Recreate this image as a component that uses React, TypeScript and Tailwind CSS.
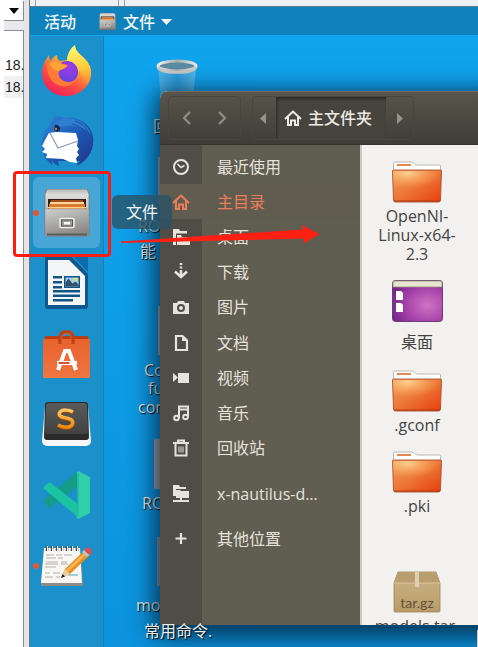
import type { ReactNode } from "react";

const uiFont = "font-['Open_Sans','Noto_Sans_CJK_SC',sans-serif]";

function FirefoxIcon() {
  return (
    <svg width="50" height="52" viewBox="0 0 50 52" aria-hidden="true">
      <defs>
        <linearGradient id="ffBody" x1="0.8" y1="0" x2="0.25" y2="1">
          <stop offset="0" stopColor="#fff35a" />
          <stop offset="0.35" stopColor="#ffb534" />
          <stop offset="0.65" stopColor="#fb5440" />
          <stop offset="1" stopColor="#f01c5c" />
        </linearGradient>
        <linearGradient id="ffTail" x1="0.3" y1="0" x2="0.5" y2="1">
          <stop offset="0" stopColor="#fffb70" />
          <stop offset="0.6" stopColor="#ffc93c" />
          <stop offset="1" stopColor="#ff8b3a" stopOpacity="0.2" />
        </linearGradient>
        <radialGradient id="ffGlobe" cx="0.6" cy="0.3" r="0.8">
          <stop offset="0" stopColor="#a03ae8" />
          <stop offset="1" stopColor="#5b46d8" />
        </radialGradient>
      </defs>
      <path d="M7 10c0 3 1 5 2 6 1-3 3-5 6-6 0 3 1 5 3 6l7-1c1-6 3-11 8-15 0 6 5 9 10 14 4 4 6 8 6 13 0 14-11 24-25 24S0 41 0 28c0-6 3-13 7-18z" fill="url(#ffBody)" />
      <path d="M33 0c0 6 5 9 10 14 8 9 8 20 2 28-2-12-8-18-20-24 0-8 2-13 8-18z" fill="url(#ffTail)" />
      <circle cx="25" cy="27" r="11" fill="url(#ffGlobe)" />
      <path d="M5 20c4-3 9-4 13-3 3 3 6 2 8 3-1 3-6 4-9 6-1 3 0 8 5 10 4 2 8 1 11-1-3 6-11 8-17 5C9 37 5 30 5 20z" fill="#ff7a35" />
      <path d="M7 18c4-2 8-2 11 0 3 2 5 1 7 3-2 3-6 3-8 5-4 0-8-3-10-8z" fill="#ffa436" />
    </svg>
  );
}

function ThunderbirdIcon() {
  return (
    <svg width="54" height="52" viewBox="0 0 54 52" aria-hidden="true">
      <defs>
        <linearGradient id="tbBlue" x1="0" y1="0" x2="1" y2="1">
          <stop offset="0" stopColor="#2f86d8" />
          <stop offset="0.5" stopColor="#1d5db8" />
          <stop offset="1" stopColor="#233087" />
        </linearGradient>
      </defs>
      <path d="M13 1c4-2 8-1 11 1 14-2 26 5 29 18 2 13-5 25-17 30l4-5-22 0 1 5c-3-1-5-3-7-5l0 4C5 44 0 34 2 25l2-8C7 11 11 9 13 1z" fill="url(#tbBlue)" />
      <path d="M24 2c14 0 24 6 27 17-6-8-15-10-24-9-8 0-11 3-14 6 0-6 4-12 11-14z" fill="#2f7fce" />
      <path d="M32 8c9 1 15 8 15 17M35 5c9 3 14 9 15 18" fill="none" stroke="#1b4fa6" strokeWidth="1" />
      <path d="M9 17l7-1 20 1 2 7-1 6 2 3-2 3 2 3-3 3 1 5-7-1-7-3-17-1 1-4-5-2 3-3-3-3 3-6z" fill="#fff" />
      <path d="M10 17l8 15 20-7" fill="none" stroke="#8d9ab8" strokeWidth="1.2" />
      <path d="M15 9c3-1 6 2 5 5l-3 2-3-2z" fill="#16264f" />
      <circle cx="16" cy="13" r="1.2" fill="#c87a35" />
    </svg>
  );
}

function CabinetIcon({ size }: { size: number }) {
  return (
    <svg width={size} height={size} viewBox="0 0 48 48" aria-hidden="true">
      <defs>
        <linearGradient id="cabTop" x1="0" y1="0" x2="0" y2="1">
          <stop offset="0" stopColor="#b5b5b3" />
          <stop offset="0.12" stopColor="#dcdcda" />
          <stop offset="1" stopColor="#8d8d8b" />
        </linearGradient>
        <linearGradient id="cabFront" x1="0" y1="0" x2="0.4" y2="1">
          <stop offset="0" stopColor="#cfcfcd" />
          <stop offset="1" stopColor="#8b8a88" />
        </linearGradient>
      </defs>
      <path d="M4 0h40l2 5v40a2 2 0 0 1-2 2H4a2 2 0 0 1-2-2V5z" fill="url(#cabTop)" stroke="#72716f" strokeWidth="0.7" />
      <path d="M5 10h38v14H5z" fill="#2b221c" />
      <path d="M8 11h32v10H8z" fill="#a54919" />
      <path d="M7 13h34v2H7z" fill="#ffd8a0" />
      <path d="M6 15h36v5H6z" fill="#d97a2c" />
      <path d="M5 18h38v1.500H5z" fill="#ffcf91" />
      <path d="M2 20h44v25a2 2 0 0 1-2 2H4a2 2 0 0 1-2-2z" fill="url(#cabFront)" stroke="#8f8e8c" strokeWidth="0.500" />
      <path d="M4 45.500h40" stroke="#5d5c5a" strokeWidth="2" />
      <rect x="17" y="29.500" width="14" height="9" rx="1" fill="#a3a2a0" stroke="#eee" strokeWidth="1.500" />
      <rect x="18.500" y="31" width="11" height="6" fill="none" stroke="#555" strokeWidth="1" />
      <rect x="21" y="33" width="6" height="2.500" fill="#f8f8f8" />
    </svg>
  );
}

function WriterIcon() {
  return (
    <svg width="45" height="54" viewBox="0 0 45 54" aria-hidden="true">
      <path d="M3 0h24l17 18v32a3 3 0 0 1-3 3H4a3 3 0 0 1-3-3V3a3 3 0 0 1 2-3z" fill="#10578b" />
      <path d="M29 0h13a2 2 0 0 1 2 2v14z" fill="#0e6aa8" />
      <path d="M4 4h21l16 16v29H4z" fill="#f3f5f7" />
      <g fill="#115587">
        <path d="M9 20h9v2.500H9zM9 25h9v2.500H9zM9 30h9v2.500H9zM9 34h27v2.500H9zM9 38.500h27V41H9zM9 43h20v2.500H9z" />
        <rect x="20" y="20" width="16" height="12" />
      </g>
      <rect x="21.500" y="21.500" width="13" height="9" fill="#a5cfea" />
      <path d="M21.500 30.500v-4l3-4 4 5 3-2 3 3v2z" fill="#36506b" />
      <circle cx="32" cy="23.500" r="1.800" fill="#d9e36a" />
    </svg>
  );
}

function SoftwareIcon() {
  return (
    <svg width="47" height="48" viewBox="0 0 47 48" aria-hidden="true">
      <defs>
        <linearGradient id="bag" x1="0" y1="0" x2="0" y2="1">
          <stop offset="0" stopColor="#e9622c" />
          <stop offset="1" stopColor="#ef7541" />
        </linearGradient>
      </defs>
      <path d="M2 6h43v6H2z" fill="#b63d14" />
      <path d="M0 9h47v38a1 1 0 0 1-1 1H1a1 1 0 0 1-1-1z" fill="url(#bag)" />
      <path d="M17 14V7c0-3 2-5 5-5h3c3 0 5 2 5 5v7" fill="none" stroke="#bd4317" strokeWidth="3.500" />
      <path d="M19 13V7c0-2 1-3 3-3h3c2 0 3 1 3 3v6" fill="none" stroke="#e2602f" strokeWidth="1" />
      <path d="M15 40l7-19h4l7 19" fill="none" stroke="#fff" strokeWidth="4" />
      <path d="M14 31h20v4H14z" fill="#fff" />
      <path d="M15.500 32h11v2h-11z" fill="#d6542a" />
    </svg>
  );
}

function SublimeIcon() {
  return (
    <svg width="49" height="45" viewBox="0 0 49 45" aria-hidden="true">
      <defs>
        <linearGradient id="subl" x1="0" y1="0" x2="0" y2="1">
          <stop offset="0" stopColor="#5b5b5b" />
          <stop offset="1" stopColor="#414141" />
        </linearGradient>
        <linearGradient id="sublS" x1="0" y1="0" x2="0" y2="1">
          <stop offset="0" stopColor="#ffc463" />
          <stop offset="1" stopColor="#f08a16" />
        </linearGradient>
      </defs>
      <path d="M3 4h43l3 35a5 5 0 0 1-5 5H5a5 5 0 0 1-5-5z" fill="#f7f7f7" />
      <path d="M6 0h37a3 3 0 0 1 3 3l1 32a3 3 0 0 1-3 3H5a3 3 0 0 1-3-3L3 3a3 3 0 0 1 3-3z" fill="#2b2b2b" />
      <path d="M7 1h35a3 3 0 0 1 3 3l1 25a3 3 0 0 1-3 3H6a3 3 0 0 1-3-3L4 4a3 3 0 0 1 3-3z" fill="url(#subl)" />
      <path d="M31 10c-4-2-10-3-13 0-2 3 0 5 6 6 6 1 8 3 6 7-2 3-8 3-14 0" fill="none" stroke="#8a4a08" strokeWidth="4" transform="translate(0 1)" />
      <path d="M31 10c-4-2-10-3-13 0-2 3 0 5 6 6 6 1 8 3 6 7-2 3-8 3-14 0" fill="none" stroke="url(#sublS)" strokeWidth="3.500" />
    </svg>
  );
}

function CodeIcon() {
  return (
    <svg width="48" height="48" viewBox="0 0 48 48" aria-hidden="true">
      <path d="M0 30l5 6c1 1 2 1 3 0L35 15V0z" fill="#159c88" />
      <path d="M0 17l5-5c1-1 2-1 3 0l28 22v13z" fill="#1bc3a0" />
      <path d="M34 1c1-1 2-1 3 0l10 5v36l-10 5c-1 1-3 1-4-1l2-2z" fill="#30cfaa" />
      <path d="M35 2v44" stroke="#1db397" strokeWidth="1" />
    </svg>
  );
}

function NotesIcon() {
  return (
    <svg width="52" height="42" viewBox="0 0 52 42" aria-hidden="true">
      <path d="M3 4h36l3 36a1 1 0 0 1-1 1H1a1 1 0 0 1-1-1z" fill="#8f8c87" />
      <path d="M3 3h36l2 35H0z" fill="#f8f7f4" />
      <path d="M6 6V1m5 5V1m5 5V1m5 5V1m5 5V1m5 5V1m5 5V1" stroke="#4e4e4e" strokeWidth="2.500" />
      <path d="M6.500 6V1m5 5V1m5 5V1m5 5V1m5 5V1m5 5V1m5 5V1" stroke="#eee" strokeWidth="1" />
      <path d="M5 10h8m2 0h6m2 0h8M5 13h10m2 0h5M5 17h12m3 0h6M4 19h13m3 0h7M4 22h11M4 28h5m3 0h7M4 32h8m3 0h4" stroke="#a9a7a3" strokeWidth="0.900" />
      <path d="M27 30h10" stroke="#7fc2d5" strokeWidth="1.500" />
      <path d="M20 33l4-9 21-20 5 5-21 20z" fill="#e98d22" />
      <path d="M25 25L46 5l2 2-21 20z" fill="#f9b556" />
      <path d="M20 33l4-9 5 5z" fill="#e8cfa4" />
      <path d="M20 33l1.500-4 2.500 2.500z" fill="#222" />
      <path d="M41 7l3-3 5 5-3 3z" fill="#b9c6c9" />
      <path d="M44 4c3-4 9 1 6 5l-2 1-5-5z" fill="#d94f55" />
    </svg>
  );
}

function TrashCan() {
  return (
    <svg width="42" height="50" viewBox="0 0 42 50" aria-hidden="true">
      <defs>
        <linearGradient id="can" x1="0" y1="0" x2="1" y2="0">
          <stop offset="0" stopColor="#4cb2e6" />
          <stop offset="0.5" stopColor="#2a9ddc" />
          <stop offset="1" stopColor="#58b8e8" />
        </linearGradient>
        <linearGradient id="rim" x1="0" y1="0" x2="1" y2="0">
          <stop offset="0" stopColor="#f1f1ef" />
          <stop offset="0.5" stopColor="#a9abaa" />
          <stop offset="1" stopColor="#ecece9" />
        </linearGradient>
      </defs>
      <path d="M2 8l4 42h30l4-42z" fill="url(#can)" />
      <ellipse cx="21" cy="7" rx="19" ry="5" fill="#5c8ca5" stroke="url(#rim)" strokeWidth="3" />
      <path d="M2 8c2 7 36 7 38 0" fill="none" stroke="#c9c9c6" strokeWidth="3" />
    </svg>
  );
}

function FolderIcon() {
  return (
    <svg width="50" height="42" viewBox="0 0 50 42" aria-hidden="true">
      <defs>
        <linearGradient id="fold" x1="0" y1="0" x2="1" y2="1">
          <stop offset="0" stopColor="#f29a5c" />
          <stop offset="0.5" stopColor="#ec7636" />
          <stop offset="1" stopColor="#e83c0c" />
        </linearGradient>
        <radialGradient id="foldGlow" cx="0.3" cy="0.1" r="0.7">
          <stop offset="0" stopColor="#ffdc9a" stopOpacity="0.85" />
          <stop offset="1" stopColor="#ffb060" stopOpacity="0" />
        </radialGradient>
      </defs>
      <path d="M1.500 10V2a1 1 0 0 1 1-1h17c3 0 3 3 6 3h22a1 1 0 0 1 1 1v6z" fill="#fff" stroke="#b3afaa" strokeWidth="0.900" />
      <path d="M5 4h14" stroke="#e9864f" strokeWidth="2" />
      <path d="M.5 10a1 1 0 0 1 1-1h47a1 1 0 0 1 1 1l-1 29a2 2 0 0 1-2 2h-43a2 2 0 0 1-2-2z" fill="url(#fold)" stroke="#a9522c" strokeWidth="0.900" />
      <path d="M1 10h48l-1 13C30 22 16 31 2 32z" fill="url(#foldGlow)" />
      <path d="M2 40h46" stroke="#ab3b16" strokeWidth="1" />
    </svg>
  );
}

function DesktopFolderIcon() {
  return (
    <svg width="51" height="42" viewBox="0 0 51 42" aria-hidden="true">
      <defs>
        <radialGradient id="desk" cx="0.7" cy="0.6" r="0.8">
          <stop offset="0" stopColor="#cf74c2" />
          <stop offset="0.5" stopColor="#a945ad" />
          <stop offset="1" stopColor="#6d2286" />
        </radialGradient>
      </defs>
      <rect x="0.500" y="0.500" width="50" height="41" rx="3" fill="url(#desk)" stroke="#65436c" />
      <path d="M1 7V3a2 2 0 0 1 2-2h45a2 2 0 0 1 2 2v4z" fill="#e9e6cf" stroke="#92907a" strokeWidth="0.800" />
      <path d="M4 11h5l2 2v7H4zM4 23h5l2 2v7H4z" fill="#fff" />
    </svg>
  );
}

function PackageIcon() {
  return (
    <svg width="48" height="42" viewBox="0 0 48 42" aria-hidden="true">
      <defs>
        <linearGradient id="pack" x1="0" y1="0" x2="0" y2="1">
          <stop offset="0" stopColor="#cdb588" />
          <stop offset="1" stopColor="#b89b69" />
        </linearGradient>
      </defs>
      <path d="M5 1h38l4 11v28a1 1 0 0 1-1 1H2a1 1 0 0 1-1-1V12z" fill="url(#pack)" stroke="#a08557" strokeWidth="0.800" />
      <path d="M5 1h38l4 11H1z" fill="#b99e6e" />
      <path d="M1 12h46" stroke="#d9c59c" />
      <path d="M22 1h4v15h-4z" fill="#ddd0b3" />
      <text x="24" y="37" textAnchor="middle" fontSize="14" fontFamily="Lato, sans-serif" fill="#66523a">tar.gz</text>
    </svg>
  );
}

function Glyph({ children }: { children: ReactNode }) {
  return (
    <svg width="18" height="18" viewBox="0 0 18 18" fill="none" stroke="currentColor" strokeWidth="2" aria-hidden="true">
      {children}
    </svg>
  );
}

const homeShape = (
  <>
    <path d="M1 10l8-7.500 8 7.500" />
    <path d="M4 8v8h3v-4.500h4V16h3V8" />
  </>
);

const places: { label: string; icon: ReactNode }[] = [
  { label: "最近使用", icon: <><circle cx="9" cy="9" r="7" /><path d="M5.500 6L9 9.500l3.500-2" strokeWidth="1.500" /></> },
  { label: "主目录", icon: homeShape },
  { label: "桌面", icon: <path d="M1 1h6l1 2h7v2.500H4V17H1zM5 7h4l1 2h8v8H5z" fill="currentColor" stroke="none" /> },
  { label: "下载", icon: <path d="M9 0v2M9 3.500v2M9 7v7M3 8.500L9 14l6-5.500" strokeWidth="2.500" /> },
  { label: "图片", icon: <><path d="M1 5h4l1-2h6l1 2h4v11H1z" fill="currentColor" stroke="none" /><circle cx="9" cy="10" r="3" stroke="#4f4d45" /></> },
  { label: "文档", icon: <><path d="M4 2h6.500L15 6.500V16H4z" strokeWidth="2.200" /><path d="M10 2v5h5z" fill="currentColor" stroke="none" /></> },
  { label: "视频", icon: <path d="M1 4l5 4.500L1 13zM6 4h11v10H6z" fill="currentColor" stroke="none" /> },
  { label: "音乐", icon: <><path d="M7 14V2.500h9V13M7 5.500h9" /><circle cx="4.500" cy="14" r="2.300" /><circle cx="13.500" cy="13" r="2.300" /></> },
  { label: "回收站", icon: <><path d="M1 4h16M6 3V1.500h6V3" /><path d="M3.500 5v11.500h11V5" /><path d="M7 7.500v6M9 7.500v6M11 7.500v6" strokeWidth="1" /></> },
];

const extraPlaces: { label: string; icon: ReactNode }[] = [
  { label: "x-nautilus-d…", icon: <path d="M1 0h6l1 2h6v2H4v7H1zM4 5h4l1 1h8v7H4zM8 12h2v3h7v2H1v-2h7z" fill="currentColor" stroke="none" /> },
  { label: "其他位置", icon: <path d="M9 3v11M3.500 8.500h11" strokeWidth="2.200" /> },
];

function PlaceRow({ label, icon, active }: { label: string; icon: ReactNode; active?: boolean }) {
  return (
    <button type="button" className={`flex min-h-[35px] w-full items-stretch text-left ${active ? "bg-[#605c50] text-[#ee7d5a]" : "text-[#e6e3dd]"}`}>
      <span className="flex w-[42px] shrink-0 items-center justify-center">
        <Glyph>{icon}</Glyph>
      </span>
      <span className="flex items-center pl-[15px] text-base leading-5">{label}</span>
    </button>
  );
}

const dock: { name: string; icon: ReactNode; running?: boolean; active?: boolean }[] = [
  { name: "Firefox", icon: <FirefoxIcon /> },
  { name: "Thunderbird", icon: <ThunderbirdIcon /> },
  { name: "文件", icon: <CabinetIcon size={48} />, running: true, active: true },
  { name: "LibreOffice Writer", icon: <WriterIcon /> },
  { name: "Ubuntu Software", icon: <SoftwareIcon /> },
  { name: "Sublime Text", icon: <SublimeIcon /> },
  { name: "Visual Studio Code", icon: <CodeIcon /> },
  { name: "gedit", icon: <NotesIcon />, running: true },
];

function Dock() {
  return (
    <nav className="w-[74px] shrink-0 border-r border-[#1780b8] bg-[#1b90ca]">
      <div className="grid h-[565px] auto-rows-fr">
        {dock.map((item) => (
          <button
            key={item.name}
            type="button"
            aria-label={item.name}
            className={`relative mx-[3px] flex items-center justify-center rounded-md ${item.active ? "bg-[#47a6d5]" : ""}`}
          >
            {item.running && <span className="absolute left-0 size-[6px] rounded-full bg-[#e95430]" />}
            {item.icon}
          </button>
        ))}
      </div>
    </nav>
  );
}

function Folder({ name, icon, cjk }: { name: string; icon: ReactNode; cjk?: boolean }) {
  return (
    <button type="button" className={`flex w-[84px] flex-col items-center text-base text-[#45433f] ${cjk ? "gap-2 leading-6" : "gap-1 leading-[19px]"}`}>
      {icon}
      <span>{name}</span>
    </button>
  );
}

function FileWindow() {
  return (
    <section className="absolute top-14 left-[130px] h-[534px] w-[420px] overflow-hidden rounded-t-lg bg-[#f2f1f0] shadow-[0_6px_24px_6px_rgba(0,20,40,0.75)]">
      <header className="flex h-[54px] gap-[11px] border-t border-[#6d695f] border-b border-b-[#35332e] bg-linear-to-b from-[#58554b] to-[#403d38] py-1 pl-2">
        <div className="flex w-[73px] rounded border border-[#494640] text-[#918d84]">
          <button type="button" aria-label="后退" className="flex flex-1 items-center justify-center">
            <svg width="10" height="14" viewBox="0 0 10 14" fill="none" stroke="currentColor" strokeWidth="2.200"><path d="M8 1L2 7l6 6" /></svg>
          </button>
          <button type="button" aria-label="前进" className="flex flex-1 items-center justify-center">
            <svg width="10" height="14" viewBox="0 0 10 14" fill="none" stroke="currentColor" strokeWidth="2.200"><path d="M2 1l6 6-6 6" /></svg>
          </button>
        </div>
        <div className="flex w-[162px] rounded border border-[#494640] text-[#98948a]">
          <button type="button" aria-label="上一级" className="flex w-[23px] items-center justify-center pr-1">
            <svg width="6" height="11" viewBox="0 0 6 11" fill="currentColor"><path d="M6 0v11L0 5.500z" /></svg>
          </button>
          <button type="button" className="flex flex-1 items-center gap-[6px] bg-[#47443e] pl-2 text-base leading-5 font-medium text-[#eeebe4] shadow-[inset_1px_2px_3px_rgba(0,0,0,0.4)]">
            <Glyph>{homeShape}</Glyph>
            主文件夹
          </button>
          <button type="button" aria-label="下一级" className="flex w-[27px] items-center justify-center">
            <svg width="6" height="11" viewBox="0 0 6 11" fill="currentColor"><path d="M0 0v11l6-5.500z" /></svg>
          </button>
        </div>
      </header>
      <div className="flex h-[480px]">
        <aside className="w-[202px] shrink-0 border-r-2 border-[#cbc9c4] bg-linear-to-r from-[#4f4d45] from-[42px] to-[#605d51] to-[42px] pt-1">
          <div className="grid h-[317px] auto-rows-fr">
            {places.map((place, i) => (
              <PlaceRow key={place.label} {...place} active={i === 1} />
            ))}
          </div>
          <div className="mt-[10px] flex flex-col gap-[10px]">
            {extraPlaces.map((place) => (
              <PlaceRow key={place.label} {...place} />
            ))}
          </div>
        </aside>
        <div className="flex flex-col items-start pt-4 pl-[13px]">
          <Folder name="OpenNI-Linux-x64-2.3" icon={<FolderIcon />} />
          <div className="mt-4"><Folder name="桌面" icon={<DesktopFolderIcon />} cjk /></div>
          <div className="mt-4"><Folder name=".gconf" icon={<FolderIcon />} /></div>
          <div className="mt-4"><Folder name=".pki" icon={<FolderIcon />} /></div>
          <div className="mt-[55px]"><Folder name="models.tar." icon={<PackageIcon />} /></div>
        </div>
      </div>
    </section>
  );
}

function DesktopItems() {
  return (
    <div className="text-base leading-[19px] text-[#e9eef0] [text-shadow:1px_1px_1px_#000]">
      <div className="absolute top-6 left-[126px]"><TrashCan /></div>
      <span className="absolute top-[82px] left-[123px]">回</span>
      <div className="absolute top-[122px] left-[128px] h-[48px] w-4 bg-[#b2aeb9]" />
      <span className="absolute top-[182px] left-[108px]">RO</span>
      <span className="absolute top-[207px] left-[110px]">能</span>
      <div className="absolute top-[271px] left-[128px] h-[49px] w-4 bg-[#b2aeb9]" />
      <span className="absolute top-[326px] left-[114px] leading-[19px]">
        Co
      </span>
      <span className="absolute top-[344px] left-[118px]">fu</span>
      <span className="absolute top-[363px] left-[108px]">con</span>
      <div className="absolute top-[404px] left-[124px] h-[50px] w-5 bg-[#aaa8a6]" />
      <span className="absolute top-[459px] left-[112px]">RO</span>
      <div className="absolute top-[502px] left-[127px] h-[49px] w-4 bg-[#93a1b4]" />
      <span className="absolute top-[561px] left-[106px]">mo</span>
    </div>
  );
}

export default function App() {
  return (
    <div className={`relative flex h-screen overflow-hidden bg-white ${uiFont}`}>
      <aside className="flex w-6 shrink-0 flex-col bg-white pl-1 font-['Liberation_Sans',sans-serif] text-sm leading-[22px] text-[#222]">
        <div className="mt-px flex h-5 items-center justify-center border-r border-b border-[#8d8d91] bg-white">
          <svg width="10" height="6" viewBox="0 0 10 6" aria-hidden="true"><path d="M0 0h10L5 6z" fill="#000" /></svg>
        </div>
        <div className="h-[9px] bg-[#e9e9ed]" />
        <div className="flex-1 border-t border-r border-[#8d8d91] pt-[23px]">
          <div className="h-[22px] pl-px">18.</div>
          <div className="h-[22px] bg-[#f0f0f1] pl-px">18.</div>
        </div>
      </aside>
      <div className="w-[6px] shrink-0 border-r border-[#74767c] bg-[#e4e4e8]" />
      <div className="flex min-w-0 flex-1 flex-col">
        <div className="flex h-[7px] shrink-0 border-b border-[#5b7f93] bg-[#eef1f3] pl-[5px]">
          <div className="w-[84px] border-x border-[#9a9da0]" />
          <div className="ml-[5px] flex-1 border-l border-[#9a9da0]" />
        </div>
        <header className="flex h-[29px] shrink-0 items-center bg-[#0f82bd] pl-[14px] text-base leading-5 font-medium text-[#f2f5f6]">
          <button type="button">活动</button>
          <button type="button" className="ml-[23px] flex items-center">
            <CabinetIcon size={17} />
            <span className="ml-[7px]">文件</span>
            <svg className="ml-[6px]" width="11" height="6" viewBox="0 0 11 6" aria-hidden="true"><path d="M0 0h11L5.500 6z" fill="#f2f5f6" /></svg>
          </button>
        </header>
        <div className="relative -mt-px flex min-h-0 flex-1 overflow-hidden bg-linear-to-b from-[#10a4ee] to-[#0b93dd] pt-px">
          <Dock />
          <DesktopItems />
          <FileWindow />
          <div className="absolute top-[585px] left-[114px] text-base leading-[22px] text-[#e9eef0] [text-shadow:1px_1px_1px_#000]">
            常用命令.
          </div>
          <div role="tooltip" className="absolute top-40 left-[82px] rounded-md bg-[#2b5266]/80 px-[14px] py-[7px] text-base leading-5 text-[#f4f6f6]">
            文件
          </div>
        </div>
      </div>
      <div className="pointer-events-none absolute top-[171px] left-[13px] h-[86px] w-[98px] rounded border-3 border-[#fb1c12]" />
      <svg className="pointer-events-none absolute top-[224px] left-[121px]" width="200" height="22" viewBox="0 0 200 22" aria-hidden="true">
        <path d="M0 17.500L182 5.500 180.600 1l18 9-16 9.500.4-5L0 19z" fill="#fe2013" />
      </svg>
      <div className="absolute right-0 bottom-0 h-[17px] w-px bg-[#eebd9b]" />
    </div>
  );
}
